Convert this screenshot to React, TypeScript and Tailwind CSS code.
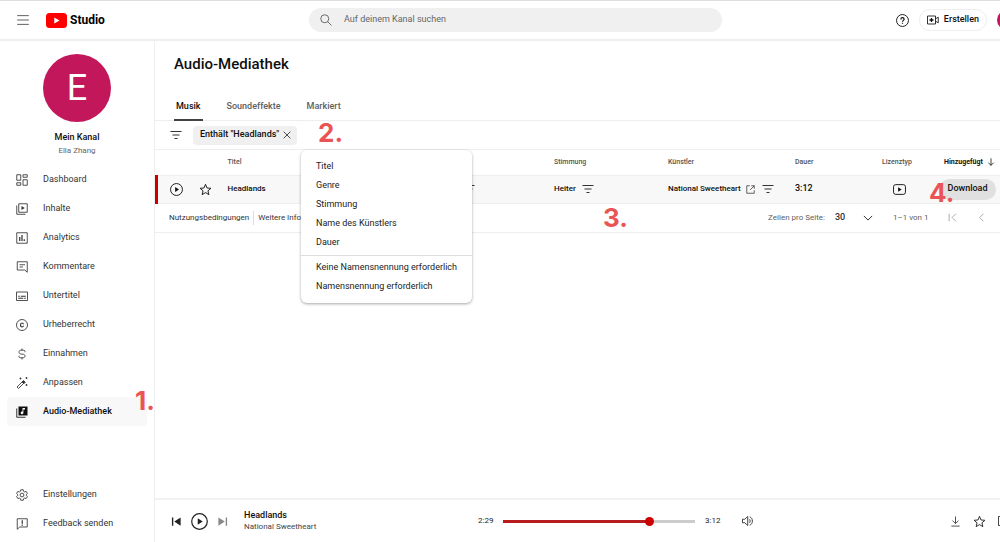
import React, {ReactNode, useState} from "react";

type IconProps = {
  children: ReactNode;
  className?: string;
  filled?: boolean;
}

const Icon = ({children, className = "size-3", filled = false}: IconProps) => (
  <svg viewBox="0 0 24 24" aria-hidden="true" className={`shrink-0 ${className}`}
       fill={filled ? "currentColor" : "none"} stroke={filled ? "none" : "currentColor"} strokeWidth="1.7">
    {children}
  </svg>
)

const FilterIcon = ({className}: { className?: string }) => (
  <Icon className={className}>
    <path d="M1 5h22M5 12h14M9 19h6"/>
  </Icon>
)

const StarIcon = ({className}: { className?: string }) => (
  <Icon className={className}>
    <path d="M12 2.500l2.800 6.700 7.200.6-5.500 4.700 1.700 7-6.200-3.800-6.200 3.800 1.700-7L2 9.800l7.200-.6z"/>
  </Icon>
)

const PlayCircleIcon = ({className}: { className?: string }) => (
  <Icon className={className}>
    <circle cx="12" cy="12" r="11"/>
    <path d="M9.500 7.500v9l7-4.500z" fill="currentColor" stroke="none"/>
  </Icon>
)

const navItems = [
  {
    name: "Dashboard",
    icon: <Icon>
      <path d="M1.500 1.500h8v11h-8zM14 1.500h8.500v5H14zM14 11.500h8.500v11H14zM1.500 17.500h8v5h-8z"/>
    </Icon>
  },
  {
    name: "Inhalte",
    icon: <Icon>
      <path d="M5.500 1.500h17v17h-17zM1.500 5v17.500H19"/>
      <path d="M11 6v8l6.500-4z" fill="currentColor" stroke="none"/>
    </Icon>
  },
  {
    name: "Analytics",
    icon: <Icon>
      <path d="M1.500 1.500h21v21h-21z"/>
      <path d="M7.500 10v8M12 6v12M16.500 14.500V18" strokeWidth="2.500"/>
    </Icon>
  },
  {
    name: "Kommentare",
    icon: <Icon>
      <path d="M2.500 1.500h20v21l-5-4.500h-15z"/>
      <path d="M7 7.500h11M7 12h7"/>
    </Icon>
  },
  {
    name: "Untertitel",
    icon: <Icon>
      <path d="M1 4h22v17H1z"/>
      <path d="M4.500 12.500h3M9.500 12.500h10M4.500 16.500h10M16.500 16.500h3" strokeWidth="2.200"/>
    </Icon>
  },
  {
    name: "Urheberrecht",
    icon: <Icon>
      <circle cx="12" cy="12" r="11"/>
      <path d="M15 10.500c-.3-1.600-1.400-2.500-3-2.500-2 0-3 1.600-3 4s1 4 3 4c1.600 0 2.700-.9 3-2.500" strokeWidth="2.400"/>
    </Icon>
  },
  {
    name: "Einnahmen",
    icon: <Icon>
      <path d="M12 1v3.500M12 19.500V23M18 8.500V7c0-1.500-1-2.500-2.500-2.500h-6C7.500 4.500 6 6 6 8s1.500 3.500 3.500 4l5 .5c2 .3 3.500 1.500 3.500 3.500s-1.500 3.500-3.500 3.500h-6C7 19.500 6 18.500 6 17v-1.500"/>
    </Icon>
  },
  {
    name: "Anpassen",
    icon: <Icon>
      <path d="M2 20L13 9l3 3L5 23z"/>
      <path d="M12 10l3-3 3.500 3.500-3 3z" fill="currentColor"/>
      <path d="M9 1v4M7 3h4M21 0v4M19 2h4M21 14v4M19 16h4"/>
    </Icon>
  },
  {
    name: "Audio-Mediathek",
    icon: <Icon>
      <path d="M1.500 5v17.500H19"/>
      <path fill="currentColor" stroke="none" fillRule="evenodd"
            d="M5 1h18v18H5zM13 4v7.200a2.700 2.700 0 1 0 1.800 2.500V7H18V4z"/>
    </Icon>
  }
]

const footerItems = [
  {
    name: "Einstellungen",
    icon: <Icon>
      <path strokeLinejoin="round"
            d="M9.500 1.500h5l.7 3.200 2 1.200 3.200-1 2.400 4.200-2.400 2.200v1.400l2.400 2.200-2.400 4.200-3.200-1-2 1.200-.7 3.200h-5l-.7-3.200-2-1.200-3.200 1-2.400-4.200 2.400-2.200v-1.400L1.200 9.100l2.400-4.200 3.200 1 2-1.200z"/>
      <circle cx="12" cy="12" r="3.800"/>
    </Icon>
  },
  {
    name: "Feedback senden",
    icon: <Icon>
      <path d="M2.500 22.500v-21h20V18h-15z"/>
      <path d="M12.500 4.500v7M12.500 13v2.500" strokeWidth="2.400"/>
    </Icon>
  }
]

const filterGroups = [
  ["Titel", "Genre", "Stimmung", "Name des Künstlers", "Dauer"],
  ["Keine Namensnennung erforderlich", "Namensnennung erforderlich"]
]

const tabs = ["Musik", "Soundeffekte", "Markiert"];

const Header = () => (
  <header className="flex items-center shrink-0 h-[41px] border-t border-b-2 border-t-[#dedede] border-b-[#eeeeee] overflow-hidden">
    <div className="flex items-center shrink-0 w-[309px] pl-4">
      <button type="button" aria-label="Menü" className="mr-4 text-[#555]">
        <Icon className="size-[14px]">
          <path d="M2 4.500h20M2 12h20M2 19.500h20" strokeWidth="1.600"/>
        </Icon>
      </button>
      <a href="#" className="flex items-center gap-[3px] text-black">
        <svg viewBox="0 0 42 30" aria-hidden="true" className="w-[21px] h-[15px]">
          <rect width="42" height="30" rx="7" fill="#f00"/>
          <path d="M16.500 9v12L27 15z" fill="#fff"/>
        </svg>
        <span className="font-bold text-[12px] leading-4">Studio</span>
      </a>
    </div>
    <label className="flex items-center flex-1 h-6 pl-[11px] rounded-full bg-[#f0f0f0] text-[#555]">
      <Icon className="size-3">
        <circle cx="9.500" cy="9.500" r="8"/>
        <path d="M15.500 15.500L23 23"/>
      </Icon>
      <input type="search" aria-label="Suche" placeholder="Auf deinem Kanal suchen"
             className="flex-1 ml-3 bg-transparent text-[9px] placeholder:text-[#666] outline-none"/>
    </label>
    <div className="flex items-center justify-end shrink-0 w-[295px] -mr-[17px]">
      <button type="button" aria-label="Hilfe" className="mr-[10px]">
        <Icon className="size-[13px]">
          <circle cx="12" cy="12" r="11"/>
          <path d="M9 10c0-2 1.300-3.300 3-3.300s3 1.200 3 2.900c0 2-3 2.300-3 4.600M12 16v2.200" strokeWidth="2.200"/>
        </Icon>
      </button>
      <button type="button"
              className="flex items-center gap-[5px] h-[22px] px-[7px] mr-[10px] rounded-full border border-[#eeeeee] text-[9px] font-medium">
        <Icon className="size-3">
          <path d="M1 4h16v16H1zM17 9.500l5.500-3v11l-5.500-3"/>
          <path d="M9 8v8M5 12h8" strokeWidth="2.600"/>
        </Icon>
        Erstellen
      </button>
      <div className="size-5 rounded-full bg-[#c2185b]"/>
    </div>
  </header>
)

const Sidebar = () => {

  const [active, setActive] = useState("Audio-Mediathek");

  const renderItem = ({name, icon}: { name: string, icon: ReactNode }) => (
    <li key={name}>
      <button type="button" onClick={() => setActive(name)}
              className={`flex items-center gap-[15px] w-full h-[29px] pl-[9px] rounded text-[9px] ${active === name ? "bg-[#f8f8f8] font-medium text-[#0f0f0f]" : "text-[#333]"}`}>
        {icon}
        {name}
      </button>
    </li>
  )

  return (
    <aside className="flex flex-col shrink-0 w-[155px] border-r border-[#eeeeee]">
      <div className="flex flex-col items-center pt-[13px]">
        <div className="flex items-center justify-center size-[68px] rounded-full bg-[#c2185b] text-white text-[36px]">
          E
        </div>
        <div className="mt-2 text-[9px] leading-[14px] font-medium">Mein Kanal</div>
        <div className="text-[8px] leading-[14px] text-[#666]">Ella Zhang</div>
      </div>
      <nav className="flex flex-col flex-1 justify-between px-[7px] pt-[7px] pb-1">
        <ul>{navItems.map(renderItem)}</ul>
        <ul>{footerItems.map(renderItem)}</ul>
      </nav>
    </aside>
  )
}

const FilterMenu = () => (
  <div role="menu"
       className="absolute z-10 left-[146px] top-[29px] w-[171px] py-[7px] rounded-md bg-white shadow-[0_1px_3px_rgba(0,0,0,0.35)]">
    {
      filterGroups.map((group, index) => (
        <div key={index} className={index > 0 ? "mt-[3px] pt-[2px] border-t border-[#dddddd]" : ""}>
          {group.map(entry => (
            <button key={entry} type="button" role="menuitem"
                    className="flex items-center w-full h-[19px] pl-[15px] text-[9px] text-[#222] whitespace-nowrap hover:bg-gray-100">
              {entry}
            </button>
          ))}
        </div>
      ))
    }
  </div>
)

const TrackTable = () => (
  <table className="w-full table-fixed text-left text-[8px]">
    <colgroup>
      <col className="w-[35px]"/>
      <col className="w-7"/>
      <col/>
      <col className="w-[156px]"/>
      <col className="w-[114px]"/>
      <col className="w-[127px]"/>
      <col className="w-[87px]"/>
      <col className="w-[62px]"/>
      <col className="w-[64px]"/>
    </colgroup>
    <thead>
      <tr className="h-[25px] border-b border-[#eeeeee] text-[7px] text-[#555] whitespace-nowrap">
        <td/>
        <td/>
        <th scope="col" className="px-2 font-medium">Titel</th>
        <th scope="col" className="px-2 font-medium">Genre</th>
        <th scope="col" className="px-2 font-medium">Stimmung</th>
        <th scope="col" className="px-2 font-medium">Künstler</th>
        <th scope="col" className="px-2 font-medium">Dauer</th>
        <th scope="col" className="px-2 font-medium">Lizenztyp</th>
        <th scope="col" className="pl-2 font-bold text-[#0f0f0f]">
          <div className="flex items-center gap-1">
            Hinzugefügt
            <Icon className="size-2">
              <path d="M12 1v21M4 14l8 8 8-8" strokeWidth="2.400"/>
            </Icon>
          </div>
        </th>
      </tr>
    </thead>
    <tbody>
      <tr className="h-[28px] border-b border-[#eeeeee] bg-[#f8f8f8] font-medium">
        <td className="border-l-[3px] border-l-[#c00]">
          <button type="button" aria-label="Headlands abspielen" className="block ml-3">
            <PlayCircleIcon className="size-[13px]"/>
          </button>
        </td>
        <td className="pl-[7px]">
          <button type="button" aria-label="Headlands markieren" className="block">
            <StarIcon className="size-[13px]"/>
          </button>
        </td>
        <td className="px-2">Headlands</td>
        <td className="px-2">
          <div className="flex justify-end w-[77px]">
            <FilterIcon/>
          </div>
        </td>
        <td className="px-2">
          <div className="flex items-center gap-[6px]">
            Heiter
            <FilterIcon/>
          </div>
        </td>
        <td className="pl-2 whitespace-nowrap">
          <div className="flex items-center gap-[5px]">
            National Sweetheart
            <Icon className="size-[9px] mr-[2px] text-[#444]">
              <path d="M10 2H2v20h20v-8M14 2h8v8M22 2L11 13" strokeWidth="2.200"/>
            </Icon>
            <FilterIcon/>
          </div>
        </td>
        <td className="px-2 text-[9px]">3:12</td>
        <td>
          <Icon className="size-[13px] ml-[19px]">
            <rect x="1" y="3" width="22" height="18" rx="4"/>
            <path d="M9.500 8v8l6.500-4z" fill="currentColor" stroke="none"/>
          </Icon>
        </td>
        <td>
          <button type="button"
                  className="flex items-center justify-center w-[57px] h-[21px] ml-[3px] rounded-full bg-[#e0e0e0] text-[9px]">
            Download
          </button>
        </td>
      </tr>
    </tbody>
  </table>
)

const Pagination = () => (
  <div className="flex items-center h-[29px] px-[14px] border-b border-[#eeeeee] text-[8px] text-[#333]">
    <a href="#">Nutzungsbedingungen</a>
    <a href="#" className="ml-1 pl-1 border-l border-[#dddddd] leading-[14px]">Weitere Informationen</a>
    <label htmlFor="page-size" className="ml-auto text-[#606060]">Zeilen pro Seite:</label>
    <div className="relative flex items-center w-[38px] ml-[10px] mr-5">
      <select id="page-size" defaultValue="30"
              className="w-full appearance-none bg-transparent text-[9px] font-medium outline-none">
        <option>30</option>
        <option>50</option>
      </select>
      <Icon className="size-[10px] absolute right-0 pointer-events-none">
        <path d="M2 7l10 10L22 7" strokeWidth="2.400"/>
      </Icon>
    </div>
    <span className="w-[33px] whitespace-nowrap text-[#606060]">1–1 von 1</span>
    <button type="button" aria-label="Erste Seite" className="ml-[22px] text-[#999]">
      <Icon className="size-[9px]">
        <path d="M3 2v20M21 2L11 12l10 10" strokeWidth="2.200"/>
      </Icon>
    </button>
    <button type="button" aria-label="Vorherige Seite" className="ml-5 text-[#999]">
      <Icon className="size-[9px]">
        <path d="M17 2L7 12l10 10" strokeWidth="2.200"/>
      </Icon>
    </button>
  </div>
)

const Player = () => {

  const duration = 192;
  const [position, setPosition] = useState(149);
  const played = position / duration * 100;
  const time = (seconds: number) => `${Math.floor(seconds / 60)}:${String(seconds % 60).padStart(2, "0")}`;

  return (
    <footer className="flex items-center shrink-0 h-[44px] border-t-2 border-[#f2f2f2] overflow-hidden text-[#222]">
      <div className="flex items-center shrink-0 w-[323px] pl-4">
        <button type="button" aria-label="Zurück">
          <Icon filled className="size-[11px]">
            <path d="M2 3h3v18H2zM21 3v18L7 12z"/>
          </Icon>
        </button>
        <button type="button" aria-label="Wiedergabe" className="mx-[9px]">
          <PlayCircleIcon className="size-[17px]"/>
        </button>
        <button type="button" aria-label="Weiter" className="text-[#888]">
          <Icon filled className="size-[11px]">
            <path d="M22 3h-3v18h3zM3 3v18l14-9z"/>
          </Icon>
        </button>
        <div className="ml-4">
          <div className="text-[9px] leading-3 font-medium text-[#0f0f0f]">Headlands</div>
          <div className="text-[8px] leading-3 text-[#444]">National Sweetheart</div>
        </div>
      </div>
      <span className="w-[25px] text-[8px]">{time(position)}</span>
      <input type="range" aria-label="Position" min={0} max={duration} value={position}
             onChange={event => setPosition(Number(event.target.value))}
             style={{background: `linear-gradient(to right, #b91c1c ${played}%, #ccc ${played}%)`}}
             className="flex-1 min-w-0 max-w-[192px] h-[3px] appearance-none outline-none [&::-webkit-slider-thumb]:appearance-none [&::-webkit-slider-thumb]:size-[9px] [&::-webkit-slider-thumb]:rounded-full [&::-webkit-slider-thumb]:bg-[#c00]"/>
      <span className="w-[27px] ml-[10px] text-[8px]">{time(duration)}</span>
      <button type="button" aria-label="Lautstärke" className="ml-[10px]">
        <Icon className="size-3">
          <path d="M1 8.500v7h4.500l6 5.500V3l-6 5.500zM15 8.500c1.700 1.800 1.700 5.200 0 7M15.500 3.500c7 3 7 14 0 17"/>
        </Icon>
      </button>
      <div className="flex items-center gap-3 ml-auto -mr-[10px]">
        <button type="button" aria-label="Herunterladen">
          <Icon className="size-[11px]">
            <path d="M12 1v15M5.500 10l6.500 6.500 6.500-6.500M3 22h18"/>
          </Icon>
        </button>
        <button type="button" aria-label="Markieren">
          <StarIcon className="size-[13px]"/>
        </button>
        <button type="button" aria-label="Schließen">
          <Icon>
            <path d="M1 3h22v18H1z"/>
          </Icon>
        </button>
      </div>
    </footer>
  )
}

const AudioLibrary = () => {

  const [activeTab, setActiveTab] = useState("Musik");

  return (
    <div className="flex flex-col flex-1 min-w-0">
      <main className="flex-1">
        <h1 className="pt-[11px] pl-[19px] text-[15px] leading-6 font-medium text-[#0f0f0f]">Audio-Mediathek</h1>
        <div role="tablist" className="flex gap-[22px] mt-4 pl-[19px] border-b border-[#eeeeee]">
          {
            tabs.map(tab => (
              <button key={tab} type="button" role="tab" aria-selected={activeTab === tab}
                      onClick={() => setActiveTab(tab)}
                      className={`h-[29px] pt-[2px] px-[2px] -mb-px border-b-2 text-[9px] font-medium ${activeTab === tab ? "border-[#444] text-[#0f0f0f]" : "border-transparent text-[#606060]"}`}>
                {tab}
              </button>
            ))
          }
        </div>
        <div className="relative flex items-center h-[29px] pl-[15px] border-b border-[#eeeeee]">
          <button type="button" aria-label="Filter">
            <FilterIcon/>
          </button>
          <div className="flex items-center gap-1 h-[19px] ml-[11px] pl-[7px] pr-[6px] rounded bg-[#f0f0f0] text-[9px] font-medium">
            Enthält "Headlands"
            <button type="button" aria-label="Filter entfernen">
              <Icon className="size-2">
                <path d="M2 2l20 20M22 2L2 22" strokeWidth="2.200"/>
              </Icon>
            </button>
          </div>
          <FilterMenu/>
        </div>
        <TrackTable/>
        <Pagination/>
      </main>
      <Player/>
    </div>
  )
}

// numbered markers pinned on top of the screen
const Steps = () => (
  <div className="font-['Inter',sans-serif] font-bold text-[26px] leading-[26px] text-[#ea5455] pointer-events-none">
    <span className="absolute z-20 left-[135px] top-[388px]">1.</span>
    <span className="absolute z-20 left-[318px] top-[120px]">2.</span>
    <span className="absolute z-20 left-[603px] top-[205px]">3.</span>
    <span className="absolute z-20 left-[929px] top-[180px]">4.</span>
  </div>
)

const App = () => (
  <div className="relative flex flex-col h-screen overflow-hidden bg-white font-['Roboto',sans-serif] text-[#0f0f0f]">
    <Header/>
    <div className="flex flex-1 min-h-0">
      <Sidebar/>
      <AudioLibrary/>
    </div>
    <Steps/>
  </div>
)

export default App
